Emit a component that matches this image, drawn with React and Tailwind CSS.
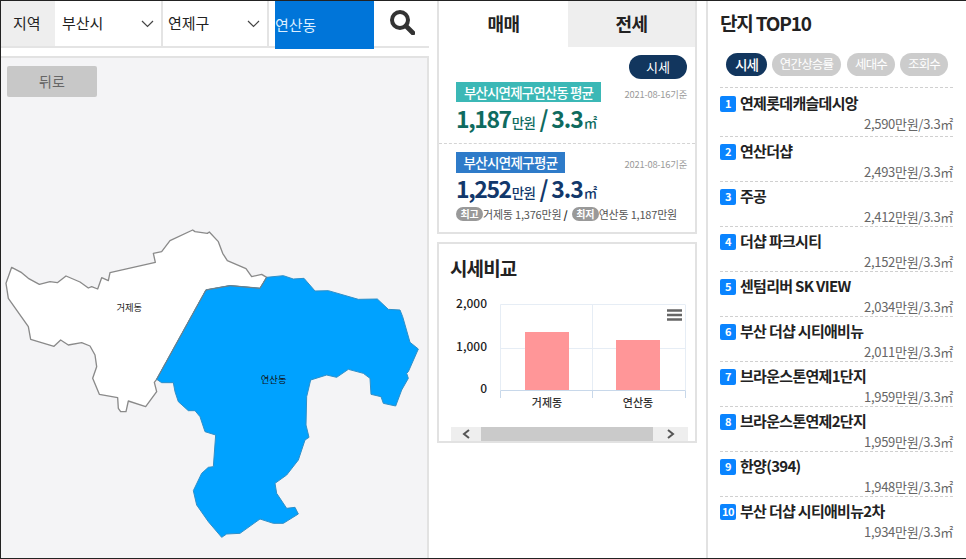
const rows = [
  ["1", "연제롯데캐슬데시앙", "2,590"],
  ["2", "연산더샵", "2,493"],
  ["3", "주공", "2,412"],
  ["4", "더샵 파크시티", "2,152"],
  ["5", "센텀리버 SK VIEW", "2,034"],
  ["6", "부산 더샵 시티애비뉴", "2,011"],
  ["7", "브라운스톤연제1단지", "1,959"],
  ["8", "브라운스톤연제2단지", "1,959"],
  ["9", "한양(394)", "1,948"],
  ["10", "부산 더샵 시티애비뉴2차", "1,934"],
];

const geoje = "M35,142 65,158 85,175 118,193 150,185 172,188 198,168 240,186 265,204 275,200 293,207 305,173 325,182 330,158 466,127 460,100 485,95 510,62 578,30 585,35 622,40 628,36 655,65 668,100 682,122 738,146 755,170 785,163 800,172 780,205 690,197 618,210 470,478 463,487 470,515 437,560 385,543 378,575 362,575 355,565 353,533 298,523 278,475 290,440 285,405 270,378 245,368 205,375 182,360 162,379 92,358 85,320 25,235 18,190Z";
const yeonsan = "M800,172 850,167 880,177 912,175 945,213 985,212 1075,238 1132,237 1165,268 1200,270 1208,290 1230,367 1255,387 1225,455 1220,460 1225,475 1205,510 1187,558 1150,550 1143,530 1113,523 1110,475 1090,460 1045,448 1010,472 980,465 932,480 920,530 918,615 927,652 915,660 895,720 860,765 825,790 830,820 860,865 885,862 895,882 850,910 820,910 780,897 720,940 680,942 665,952 625,905 590,855 580,812 605,760 625,742 640,740 647,645 615,635 600,590 585,572 565,572 535,545 525,515 520,488 485,488 470,478 618,210 690,197 780,205Z";

function Chevron() {
  return (
    <svg width="13" height="8" viewBox="0 0 13 8" fill="none" stroke="#444" strokeWidth="1.2">
      <path d="M1 1l5.5 5.5L12 1" />
    </svg>
  );
}

function Price({ value, color }) {
  return (
    <div className={`flex items-baseline font-bold leading-none tracking-[-1.4px] ${color}`}>
      <span className="text-[23px]">{value}</span>
      <span className="text-[13.5px] font-medium ml-px tracking-[-0.6px]">만원</span>
      <span className="text-[23px] ml-[4px] tracking-[-1.1px]">/ 3.3</span>
      <span className="text-[13.5px] font-medium ml-px">㎡</span>
    </div>
  );
}

export default function App() {
  return (
    <div
      className="w-[966px] h-[559px] overflow-hidden bg-white border-t border-l border-b border-[#222] flex text-[#222]"
      style={{ fontFamily: '"Noto Sans CJK KR", "Noto Sans", sans-serif' }}
    >
      <div className="w-[428px] shrink-0 flex flex-col">
        <div className="h-[47px] shrink-0 flex border-b-2 border-[#e4e4e4] text-[15px]">
          <div className="w-[54px] bg-[#eeeeee] pl-3 pt-[11px] leading-[22px]">지역</div>
          <div className="w-[108px] flex items-center justify-between pl-[7px] pr-[7px] border-r-2 border-[#e4e4e4]">
            <span>부산시</span>
            <Chevron />
          </div>
          <div className="w-[106px] flex items-center justify-between pl-[5px] pr-[7px] border-r-2 border-[#e4e4e4]">
            <span>연제구</span>
            <Chevron />
          </div>
          <div className="ml-[6px] w-[99px] h-[48px] bg-[#0075d9] text-[#dbeeff] flex items-center">연산동</div>
          <div className="flex-1 flex items-center justify-center">
            <svg width="26" height="26" viewBox="0 0 26 26" fill="none" stroke="#333" className="mt-[-3px]">
              <circle cx="11" cy="11" r="8" strokeWidth="4" />
              <path d="M17 17l7 7" strokeWidth="4.6" strokeLinecap="round" />
            </svg>
          </div>
        </div>
        <div className="mt-2 flex-1 bg-[#f4f4f6] border-t-2 border-r-2 border-[#e2e2e2] flex flex-col">
          <div className="ml-[6px] mt-[8px] w-[90px] h-[31px] bg-[#c8c8c8] rounded-[2px] text-[#666] text-[14px] flex items-center justify-center">뒤로</div>
          <svg width="428" height="339" viewBox="0 0 1284 1017" className="mt-[123px] block -ml-px shrink-0">
            <path d={geoje} fill="#fff" stroke="#8a8a8a" strokeWidth="4" strokeLinejoin="round" />
            <path d={yeonsan} fill="#00a2ff" stroke="#2f8fc8" strokeWidth="3" strokeLinejoin="round" />
            <path d="M470,478 618,210 690,197 780,205 800,172" fill="none" stroke="#6f8088" strokeWidth="3" strokeLinejoin="round" />
            <text x="388" y="272" textAnchor="middle" fontSize="28" fill="#222">거제동</text>
            <text x="821" y="488" textAnchor="middle" fontSize="28" fill="#111">연산동</text>
          </svg>
        </div>
      </div>

      <div className="w-[277px] shrink-0 pl-[8px] pr-[9px]">
        <div className="h-[233px] w-[260px] border-x-2 border-b-2 border-[#e2e2e2] flex flex-col">
          <div className="h-[46px] flex shrink-0 text-[18px] font-bold tracking-tight">
            <div className="w-[129px] flex items-center justify-center pb-[2px]">매매</div>
            <div className="flex-1 bg-[#eeeeee] flex items-center justify-center pb-[2px]">전세</div>
          </div>
          <div className="flex justify-end pr-[8px] pt-[8px]">
            <div className="w-[58px] h-[24px] rounded-full bg-[#12365e] text-white text-[13px] flex items-center justify-center">시세</div>
          </div>
          <div className="px-[17px] pr-[8px] mt-[3px] h-[61px]">
            <div className="flex justify-between items-center">
              <div className="h-[20px] w-[145px] bg-[#3bb8b6] text-white text-[13.5px] font-medium tracking-[-0.9px] flex items-center justify-center whitespace-nowrap">부산시연제구연산동 평균</div>
              <div className="text-[9.3px] text-[#999] mt-[5px] tracking-[-0.2px]">2021-08-16기준</div>
            </div>
            <div className="mt-[5px]"><Price value="1,187" color="text-[#0f6b5f]" /></div>
          </div>
          <div className="border-t border-dashed border-[#d4d4d4] px-[17px] pr-[8px] pt-[8px] flex-1">
            <div className="flex justify-between items-center">
              <div className="h-[21px] w-[109px] bg-[#2e7bc9] text-white text-[13.5px] font-medium tracking-[-0.7px] flex items-center justify-center whitespace-nowrap">부산시연제구평균</div>
              <div className="text-[9.3px] text-[#999] mt-[5px] tracking-[-0.2px]">2021-08-16기준</div>
            </div>
            <div className="mt-[4px]"><Price value="1,252" color="text-[#12386b]" /></div>
            <div className="mt-[7px] flex items-center text-[11px] text-[#555] whitespace-nowrap leading-none tracking-[-0.2px]">
              <span className="bg-[#999] text-white rounded-full w-[27px] h-[14px] text-[10px] font-bold flex items-center justify-center">최고</span>
              <span>거제동 1,376만원 <b className="text-[#333]">/</b></span>
              <span className="ml-[4px] bg-[#999] text-white rounded-full w-[27px] h-[14px] text-[10px] font-bold flex items-center justify-center">최저</span>
              <span>연산동 1,187만원</span>
            </div>
          </div>
        </div>

        <div className="mt-[8px] h-[201px] w-[260px] border-2 border-[#e2e2e2] flex flex-col">
          <div className="pl-[11px] pt-[10px] text-[19px] font-bold leading-[28px] tracking-[-0.9px]">시세비교</div>
          <svg width="256" height="139" viewBox="0 0 256 139" className="shrink-0 block mt-[6px]">
            <g stroke="#e6edf5" strokeWidth="1" fill="none">
              <path d="M61.5 16.5H246M61.5 60.5H246M61.5 16.5V102M153.5 16.5V102M246.5 16.5V102" />
            </g>
            <path d="M61.5 110V102.5H246.5V110M153.5 102.5V110" stroke="#c8d8ea" fill="none" />
            <rect x="86" y="44" width="44" height="58" fill="#ff9698" />
            <rect x="177" y="52" width="44" height="50" fill="#ff9698" />
            <path d="M228 22.5h15M228 27h15M228 31.5h15" stroke="#666" strokeWidth="2.4" />
            <g fontSize="12" fontWeight="500" fill="#222" textAnchor="end">
              <text x="48" y="20">2,000</text>
              <text x="48" y="63">1,000</text>
              <text x="48" y="105">0</text>
            </g>
            <g fontSize="11" fontWeight="500" fill="#333" textAnchor="middle">
              <text x="108" y="119">거제동</text>
              <text x="199" y="119">연산동</text>
            </g>
          </svg>
          <div className="ml-[12px] w-[237px] h-[14px] bg-[#eeeeee] flex shrink-0 items-center">
            <div className="w-[30px] flex justify-center">
              <svg width="9" height="10" viewBox="0 0 9 10" fill="none" stroke="#555" strokeWidth="2"><path d="M7 1L2 5l5 4" /></svg>
            </div>
            <div className="w-[172px] h-full bg-[#cacaca]" />
            <div className="flex-1 flex justify-center">
              <svg width="9" height="10" viewBox="0 0 9 10" fill="none" stroke="#555" strokeWidth="2"><path d="M2 1l5 4-5 4" /></svg>
            </div>
          </div>
        </div>
      </div>

      <div className="flex-1 border-l-2 border-[#e2e2e2] pl-[12px] pr-[13px]">
        <div className="pt-[8px] text-[19px] font-bold leading-[28px] tracking-[-1.2px]">단지 TOP10</div>
        <div className="mt-[16px] ml-[6px] flex items-center text-[12.5px] text-white tracking-[-0.8px]">
          <div className="w-[41px] h-[23px] rounded-full bg-[#12365e] flex items-center justify-center text-[13.5px] font-medium">시세</div>
          <div className="ml-[5px] w-[69px] h-[23px] rounded-full bg-[#cccccc] flex items-center justify-center">연간상승률</div>
          <div className="ml-[6px] w-[48px] h-[23px] rounded-full bg-[#cccccc] flex items-center justify-center">세대수</div>
          <div className="ml-[5px] w-[48px] h-[23px] rounded-full bg-[#cccccc] flex items-center justify-center">조회수</div>
        </div>
        <div className="mt-[11px]">
          {rows.map(([n, name, price], i) => (
            <div
              key={n}
              className={`${i === 0 ? "h-[50px] pt-[7px] border-t" : "h-[45px] pt-[6px]"} ${i === rows.length - 1 ? "" : "border-b"} border-dashed border-[#d0d0d0]`}
            >
              <div className="flex items-center h-[17px]">
                <span className="w-[16px] h-[16px] bg-[#0a84ff] text-white text-[11px] font-bold rounded-[2px] flex items-center justify-center shrink-0 tracking-[-0.5px]">{n}</span>
                <span className="ml-[4px] text-[15px] font-bold tracking-[-0.7px] text-[#222] whitespace-nowrap">{name}</span>
              </div>
              <div className="text-right text-[13px] text-[#666] leading-[18px] mt-[3px] tracking-[-0.3px]">{price}만원/3.3㎡</div>
            </div>
          ))}
        </div>
      </div>
    </div>
  );
}
